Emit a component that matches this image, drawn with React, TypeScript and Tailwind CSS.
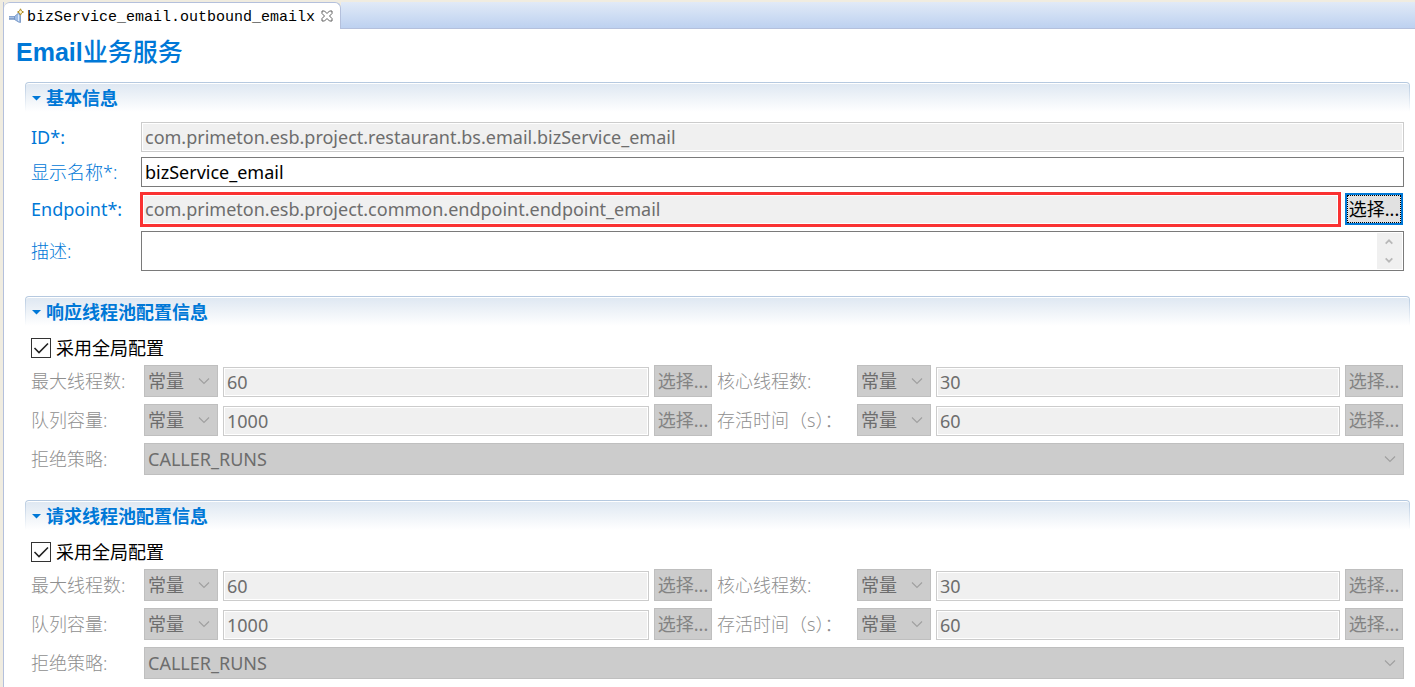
import type { ReactNode } from 'react';

const inputBase =
  "h-[30px] w-full min-w-0 border px-[3px] text-[18px] leading-6 outline-none font-['Noto_Sans','Noto_Sans_CJK_SC',sans-serif]";
const readOnlyField =
  'border-[#cccccc] bg-[#f0f0f0] text-[#6d6d6d] shadow-[inset_0_0_0_1px_#ffffff]';
const labelBase = 'text-[18px] leading-6 whitespace-nowrap';

function OutboundIcon() {
  return (
    <svg className="size-4 shrink-0" viewBox="0 0 16 16" aria-hidden="true">
      <path d="M1 8.5h6v3H1z" fill="#a9c0e2" />
      <path d="M1 11h6" stroke="#5d80b4" />
      <path d="M1 8.5h6" stroke="#86a3cf" />
      <path d="M6.5 8.5L10.5 5L12.5 7.5V14.5L10.5 14L6.5 11.5z" fill="#9dbbe4" stroke="#6f8fbf" strokeWidth="0.8" />
      <path d="M10.5 6.5v6.5" stroke="#dceafb" />
      <path d="M12.5 0.8L13.5 3L15.5 4L13.5 5L12.5 7.2L11.5 5L9.5 4L11.5 3z" fill="#fff6c8" stroke="#a8841b" strokeWidth="0.9" />
    </svg>
  );
}

function Chevron({ up = false, bold = false, className = '' }: { up?: boolean; bold?: boolean; className?: string }) {
  return (
    <svg className={className} width="12" height="8" viewBox="0 0 12 8" fill="none" aria-hidden="true">
      <path
        d={up ? 'M1 6.5L6 1.5L11 6.5' : 'M1 1.5L6 6.5L11 1.5'}
        stroke="currentColor"
        strokeWidth={bold ? 2.6 : 1.2}
      />
    </svg>
  );
}

function Section({ title, children }: { title: string; children: ReactNode }) {
  return (
    <section>
      <div className="ml-[21px] mr-[5px] h-[30px] rounded-t-[4px] bg-linear-to-b from-[#b4c8df] to-white px-px pt-px">
        <h2 className="h-full rounded-t-[3px] border-t border-white bg-linear-to-b from-[#dfe8f2] to-white text-[18px] leading-7 font-bold text-[#0078d7]">
          <button type="button" aria-expanded="true" className="flex items-center gap-[5px] pl-[6px]">
            <svg width="9" height="5" viewBox="0 0 9 5" aria-hidden="true">
              <path d="M0 0h9L4.5 4.5z" fill="#0078d7" />
            </svg>
            {title}
          </button>
        </h2>
      </div>
      {children}
    </section>
  );
}

function PickButton({ label, disabled = false }: { label: string; disabled?: boolean }) {
  return (
    <button
      type="button"
      aria-label={label}
      disabled={disabled}
      className={
        disabled
          ? 'h-8 w-[58px] border border-[#bfbfbf] bg-[#cccccc] text-center text-[18px] leading-6 whitespace-nowrap text-[#838383]'
          : 'h-8 w-[58px] border-2 border-[#0078d7] bg-[#e1e1e1] text-center text-[18px] leading-6 whitespace-nowrap text-black outline-1 -outline-offset-3 outline-dotted outline-black'
      }
    >
      选择...
    </button>
  );
}

function DisabledSelect({ id, value, label }: { id?: string; value: string; label?: string }) {
  return (
    <div className="relative h-8 w-full">
      <select
        id={id}
        aria-label={label}
        disabled
        className="h-8 w-full appearance-none border border-[#bfbfbf] bg-[#cccccc] px-[3px] text-[18px] leading-7 text-[#6d6d6d] opacity-100"
      >
        <option>{value}</option>
      </select>
      <Chevron className="pointer-events-none absolute top-3 right-2 text-[#a0a0a0]" />
    </div>
  );
}

function PoolField({ id, label, value }: { id: string; label: string; value: string }) {
  return (
    <>
      <label htmlFor={id} className={`${labelBase} font-light text-[#8f8f8f]`}>
        {label}
      </label>
      <DisabledSelect value="常量" label={`${label} 类型`} />
      <input id={id} disabled defaultValue={value} className={`${inputBase} ${readOnlyField} self-end`} />
      <PickButton label={`${label} 选择`} disabled />
    </>
  );
}

function PoolSection({ name, title }: { name: string; title: string }) {
  return (
    <Section title={title}>
      <label className="mt-[9px] ml-[27px] flex h-[26px] w-fit items-center gap-[5px] text-[18px] leading-6">
        <span className="relative size-5">
          <input type="checkbox" defaultChecked className="peer block size-5 appearance-none border border-[#333333] bg-white" />
          <svg className="pointer-events-none absolute inset-0 hidden peer-checked:block" viewBox="0 0 20 20" fill="none" aria-hidden="true">
            <path d="M3.5 10L8 14.5L17 5.5" stroke="#222222" strokeWidth="1.6" />
          </svg>
        </span>
        采用全局配置
      </label>
      <div className="mt-1 mr-3 ml-[27px] grid grid-cols-[108px_74px_minmax(0,425fr)_58px_135px_74px_minmax(0,403fr)_58px] items-center gap-x-[5px] gap-y-[7px]">
        <PoolField id={`${name}-max`} label="最大线程数:" value="60" />
        <PoolField id={`${name}-core`} label="核心线程数:" value="30" />
        <PoolField id={`${name}-queue`} label="队列容量:" value="1000" />
        <PoolField id={`${name}-alive`} label="存活时间（s）：" value="60" />
        <label htmlFor={`${name}-reject`} className={`${labelBase} font-light text-[#8f8f8f]`}>
          拒绝策略:
        </label>
        <div className="col-span-7 -mr-px">
          <DisabledSelect id={`${name}-reject`} value="CALLER_RUNS" />
        </div>
      </div>
    </Section>
  );
}

export default function App() {
  const blueLabel = `${labelBase} text-[#0078d7]`;
  const blueCjkLabel = `${labelBase} font-light text-[#0078d7]`;
  return (
    <div className="min-h-screen bg-[#f0ece0] pt-[2px] pl-[3px] font-['Noto_Sans','Noto_Sans_CJK_SC',sans-serif] text-black">
      <div className="flex h-[27px] border-l border-[#b4c0dc]">
        <div className="z-10 flex h-[27px] w-[337px] items-center rounded-t-[6px] border-t border-r border-[#b4c0dc] bg-white pl-1">
          <OutboundIcon />
          <span className="ml-[3px] pt-[3px] font-['Liberation_Mono',monospace] text-[15px] leading-6">bizService_email.outbound_emailx</span>
          <button type="button" aria-label="关闭" className="ml-[6px]">
            <svg width="12" height="12" viewBox="0 0 12 12" fill="none" aria-hidden="true">
              <path
                d="M1 1h2.5L6 3.5L8.5 1H11v2.5L8.5 6L11 8.5V11H8.5L6 8.5L3.5 11H1V8.5L3.5 6L1 3.5z"
                stroke="#606060"
              />
            </svg>
          </button>
        </div>
        <div className="h-[27px] flex-1 border-b border-[#b4c0dc] bg-linear-to-b from-[#e1eaf7] to-[#bdd1f0]" />
      </div>

      <main className="min-h-[658px] border-l border-[#b4c0dc] bg-white pb-2">
        <h1 className="h-[53px] pt-[7px] pl-3 font-['Liberation_Sans','Noto_Sans_CJK_SC',sans-serif] text-[25px] leading-8 font-bold text-[#0078d7]">
          Email<span className="font-medium">业务服务</span>
        </h1>

        <Section title="基本信息">
          <div className="mt-[10px] mr-[11px] ml-[27px] grid grid-cols-[110px_minmax(0,1fr)] items-center gap-y-[5px]">
            <label htmlFor="service-id" className={blueLabel}>ID*:</label>
            <input id="service-id" readOnly defaultValue="com.primeton.esb.project.restaurant.bs.email.bizService_email" className={`${inputBase} ${readOnlyField}`} />

            <label htmlFor="service-name" className={blueCjkLabel}>显示名称*:</label>
            <input id="service-name" defaultValue="bizService_email" className={`${inputBase} border-[#7a7a7a] bg-white text-black`} />

            <label htmlFor="service-endpoint" className={blueLabel}>Endpoint*:</label>
            <div className="flex h-[34px] items-start gap-1">
              <input
                id="service-endpoint"
                readOnly
                defaultValue="com.primeton.esb.project.common.endpoint.endpoint_email"
                className="-ml-px h-[35px] min-w-0 flex-1 border-3 border-[#fa3232] bg-[#f0f0f0] px-[2px] pb-px text-[18px] leading-6 text-[#6d6d6d] shadow-[inset_0_0_0_1px_#ffffff] outline-none"
              />
              <div className="mr-px flex self-center">
                <PickButton label="选择 Endpoint" />
              </div>
            </div>

            <label htmlFor="service-desc" className={blueCjkLabel}>描述:</label>
            <div className="flex h-10 border border-[#7a7a7a] bg-white p-px">
              <textarea id="service-desc" className="h-full min-w-0 flex-1 resize-none px-1 text-[18px] leading-6 outline-none" />
              <div className="flex w-[25px] flex-col items-center justify-between bg-[#f0f0f0] py-[5px] pr-[2px] text-[#b8b8b8]">
                <Chevron up bold className="w-2" />
                <Chevron bold className="w-2" />
              </div>
            </div>
          </div>
        </Section>

        <div className="mt-[25px] flex flex-col gap-[25px]">
          <PoolSection name="response" title="响应线程池配置信息" />
          <PoolSection name="request" title="请求线程池配置信息" />
        </div>
      </main>
    </div>
  );
}
